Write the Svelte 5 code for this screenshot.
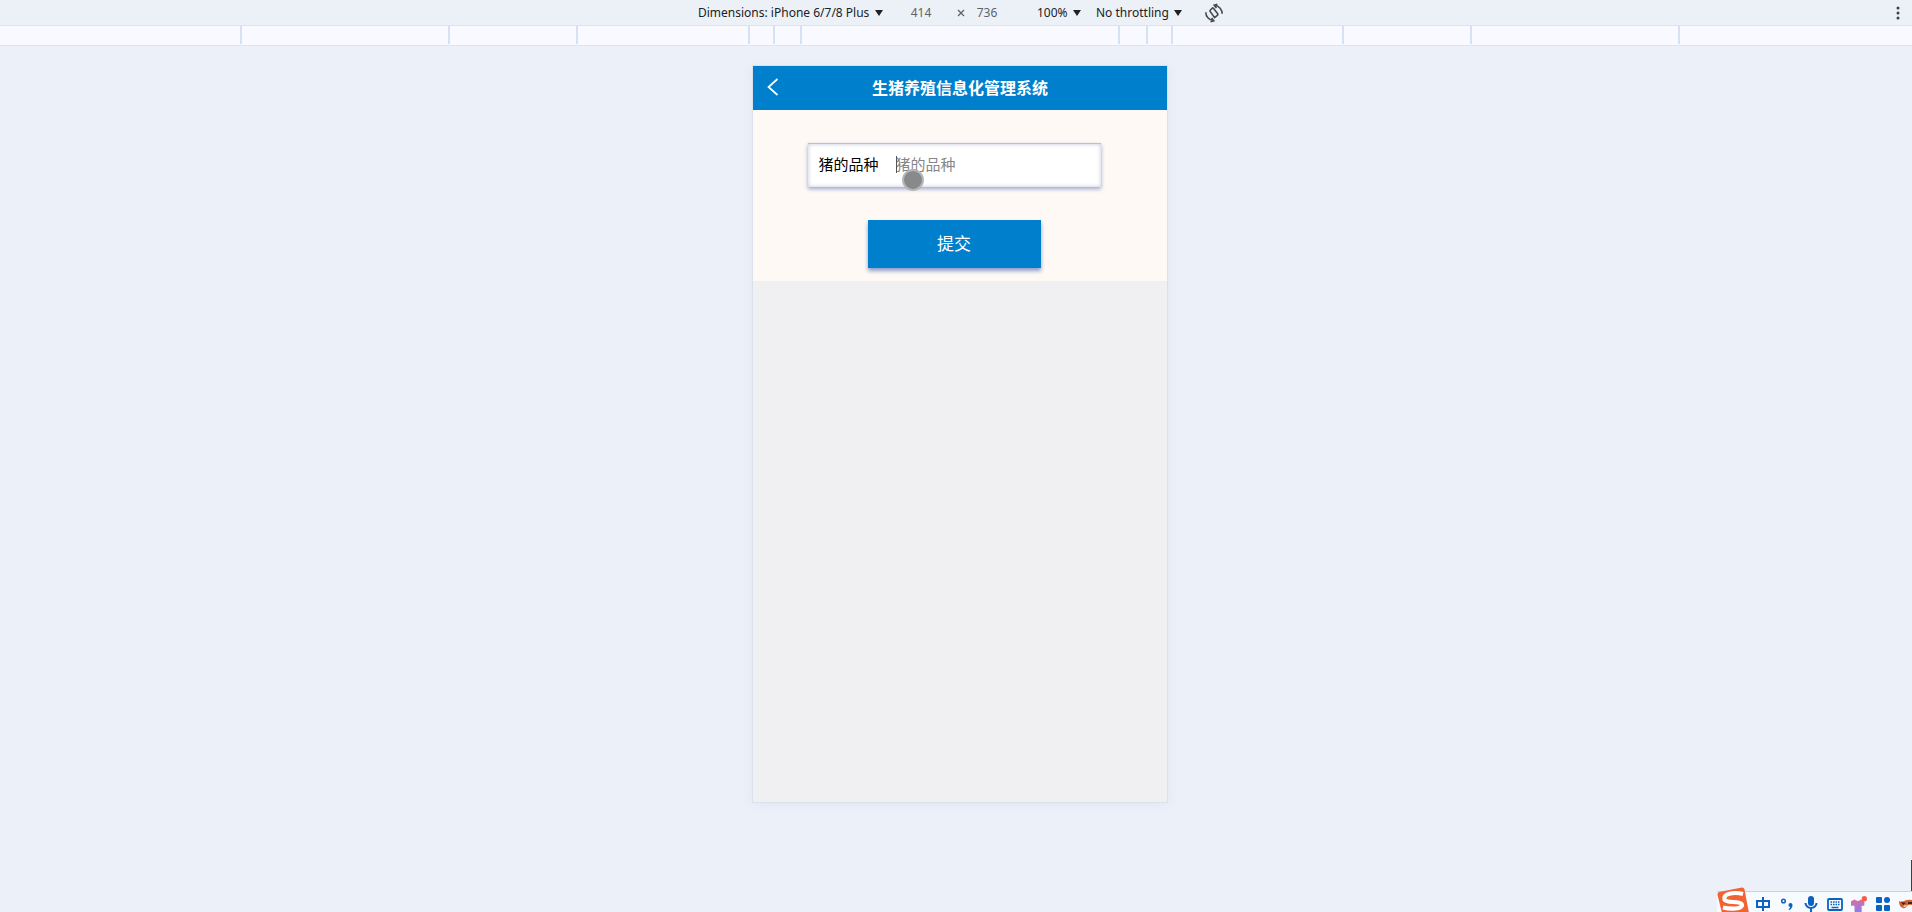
<script>
	const breakpoints = [1440, 1024, 768, 425, 375, 320];

	let device = $state('iPhone 6/7/8 Plus');
	let width = $state('414');
	let height = $state('736');
	let zoom = $state('100%');
	let network = $state('No throttling');
	let breed = $state('');
</script>

<svelte:head>
	<title>生猪养殖信息化管理系统</title>
</svelte:head>

{#snippet arrow()}
	<svg class="arrow" width="8" height="6" viewBox="0 0 8 6" aria-hidden="true">
		<path d="M0 0h8L4 6z" fill="#202124" />
	</svg>
{/snippet}

<div class="devtools">
	<div class="toolbar">
		<div class="controls">
			<label class="picker device">
				<select bind:value={device} aria-label="Device">
					<option value="iPhone 6/7/8 Plus">Dimensions: iPhone 6/7/8 Plus</option>
				</select>
				{@render arrow()}
			</label>
			<div class="size">
				<input bind:value={width} aria-label="Width" />
				<svg width="8" height="8" viewBox="0 0 8 8" stroke="#5f6368" stroke-width="1.3" aria-hidden="true">
					<path d="M1 1l6 6M7 1L1 7" />
				</svg>
				<input bind:value={height} aria-label="Height" />
			</div>
			<label class="picker zoom">
				<select bind:value={zoom} aria-label="Zoom">
					<option>100%</option>
				</select>
				{@render arrow()}
			</label>
			<label class="picker network">
				<select bind:value={network} aria-label="Throttling">
					<option>No throttling</option>
				</select>
				{@render arrow()}
			</label>
			<button class="icon-btn" aria-label="Rotate">
				<svg width="20" height="20" viewBox="0 0 20 20" fill="none" stroke="#474a4f" stroke-width="1.6">
					<path d="M8.2 5.2L6.200 7.200Q5.600 7.900 6.200 8.600L10.600 14.600 13.600 12.200Q14.300 11.500 13.700 10.800L9.400 5.200Q8.800 4.600 8.200 5.200z" />
					<path d="M1.800 9.200c0 4.200 3 8 7.600 8.600M7.600 15l2.200 2.900-3.200.9" />
					<path d="M18.200 10.800c0-4.200-3-8-7.600-8.600M12.400 5l-2.200-2.900 3.200-.9" />
				</svg>
			</button>
		</div>
		<button class="icon-btn more" aria-label="More options">
			<svg width="4" height="14" viewBox="0 0 4 14" fill="#3c4043">
				<circle cx="2" cy="2" r="1.5" />
				<circle cx="2" cy="7" r="1.5" />
				<circle cx="2" cy="12" r="1.5" />
			</svg>
		</button>
	</div>

	<div class="ruler">
		{#each breakpoints as bp}
			<div class="mark" style="width: {bp}px"></div>
		{/each}
	</div>

	<div class="stage">
		<main class="phone">
			<header>
				<button class="back" aria-label="返回">
					<svg width="12" height="18" viewBox="0 0 12 18" fill="none" stroke="#fff" stroke-width="1.7">
						<path d="M10.500 1L1.500 9l9 8" />
					</svg>
				</button>
				<h1>生猪养殖信息化管理系统</h1>
			</header>
			<form onsubmit={(e) => e.preventDefault()}>
				<div class="field">
					<label for="breed">猪的品种</label>
					<div class="entry">
						<input id="breed" placeholder="猪的品种" bind:value={breed} />
						<span class="caret"></span>
						<span class="touch"></span>
					</div>
				</div>
				<button class="submit">提交</button>
			</form>
		</main>
	</div>

	<span class="edge"></span>

	<div class="ime">
		<svg class="logo" width="32" height="26" viewBox="0 0 32 26" aria-hidden="true">
			<path d="M2 5L25 .5q2 0 2.500 2L32 26H5L.5 8q-.5-2 1.500-3z" fill="#f26334" />
			<path d="M26 7C16 4.500 6 7 7.500 12.500c1.500 4 17 1 17.500 5.500 0 4-11 4.500-19 2.500" fill="none" stroke="#fff" stroke-width="4.200" />
		</svg>
		<button aria-label="中文">
			<svg width="16" height="14" viewBox="0 0 16 14" fill="none" stroke="#0c62c0" stroke-width="2">
				<path d="M2 4h12v6H2zM8 0v14" />
			</svg>
		</button>
		<button aria-label="标点">
			<svg width="14" height="14" viewBox="0 0 14 14">
				<circle cx="3.5" cy="4" r="1.800" fill="none" stroke="#0c62c0" stroke-width="1.500" />
				<path d="M8.500 8a2 2 0 1 1 4 0q0 3.500-3.500 5l-.5-1q1.800-.8 1.800-2a2 2 0 0 1-1.800-2z" fill="#0c62c0" />
			</svg>
		</button>
		<button aria-label="语音">
			<svg width="14" height="16" viewBox="0 0 14 16">
				<rect x="4" y="0" width="6" height="10" rx="3" fill="#0c62c0" />
				<path d="M1.500 7a5.500 5 0 0 0 11 0M7 12v4" fill="none" stroke="#0c62c0" stroke-width="2" />
			</svg>
		</button>
		<button aria-label="键盘">
			<svg width="16" height="13" viewBox="0 0 16 13">
				<rect x="1" y="1" width="14" height="11" rx="1" fill="none" stroke="#0c62c0" stroke-width="1.800" />
				<path d="M3.500 4h9M3.500 6.500h9" stroke="#0c62c0" stroke-width="1.600" stroke-dasharray="1.600 .9" />
				<path d="M4.500 9.500h7" stroke="#0c62c0" stroke-width="1.500" />
			</svg>
		</button>
		<button aria-label="皮肤">
			<svg width="18" height="18" viewBox="0 0 18 18">
				<defs>
					<linearGradient id="shirt" x2="0" y2="1">
						<stop offset="0" stop-color="#dc6d9c" />
						<stop offset="1" stop-color="#8d7df0" />
					</linearGradient>
				</defs>
				<path d="M0 6l4-2q4 3 7 0l4 2v5h-3v7H4v-7H0z" fill="url(#shirt)" />
				<circle cx="15" cy="3" r="3" fill="#fb5b4b" />
			</svg>
		</button>
		<button aria-label="工具箱">
			<svg width="14" height="14" viewBox="0 0 14 14" fill="#0c62c0">
				<rect width="6" height="6" rx="1" />
				<circle cx="11" cy="3" r="3" />
				<rect y="8" width="6" height="6" rx="1" />
				<rect x="8" y="8" width="6" height="6" rx="1" />
			</svg>
		</button>
		<svg class="fox" width="13" height="10" viewBox="0 0 13 10" aria-hidden="true">
			<path d="M0 2q2 1 5 0 4-2 8-1v5q-3-1-5 1-2 3-4 2-4-1-4-7z" fill="#d0632f" />
			<path d="M2 3l5 1-3 2zM9 3h4v2H9z" fill="#382824" />
			<path d="M4 7l4-1-2 2z" fill="#fff" />
		</svg>
	</div>
</div>

<style>
	:global(body) {
		margin: 0;
		background: #ebf0f9;
	}

	.devtools {
		min-height: 100vh;
		display: flex;
		flex-direction: column;
		overflow: hidden;
		font-family: 'Noto Sans', 'Open Sans', sans-serif;
	}

	button,
	input,
	select {
		font: inherit;
		color: inherit;
		padding: 0;
		border: 0;
		background: none;
	}

	input,
	select {
		outline: none;
	}

	.toolbar {
		display: flex;
		align-items: center;
		height: 25px;
		padding-left: 10px;
		border-bottom: 1px solid #dce3f3;
		background: #ecf1f8;
		color: #202124;
		font-size: 12px;
		line-height: 16px;
	}

	.controls {
		flex: 1;
		display: flex;
		align-items: center;
		justify-content: center;
		margin-right: -16px;
		height: 20px;
	}

	.picker {
		display: flex;
		align-items: center;
		gap: 5px;
	}

	.picker select {
		appearance: none;
	}

	.size {
		display: flex;
		align-items: center;
		margin: 0 28px 0 16px;
		color: #5f6368;
	}

	.size input {
		width: 44px;
		text-align: center;
	}

	.size svg {
		margin-left: 14px;
	}

	.network {
		margin: 0 22px 0 15px;
	}

	.icon-btn {
		display: flex;
		align-items: center;
	}

	.more {
		margin-right: 12px;
	}

	.ruler {
		display: grid;
		justify-items: center;
		height: 19px;
		padding-left: 8px;
		border-bottom: 1px solid #dde4f1;
		background: #f8faff;
	}

	.mark {
		grid-area: 1 / 1;
		height: 18px;
		box-sizing: border-box;
		border: solid #d7e1f5;
		border-width: 0 2px;
	}

	.stage {
		flex: 1;
		display: flex;
		justify-content: center;
		align-items: flex-start;
		padding: 20px 0 20px 8px;
	}

	.phone {
		width: 414px;
		min-height: 736px;
		background: #f0f0f2;
		box-shadow: 0 0 0 1px #dbe1ea, 0 2px 10px #dfe5ef;
		font-family: 'Noto Sans CJK SC', sans-serif;
	}

	.phone header {
		display: grid;
		grid-template-columns: 40px 1fr 40px;
		align-items: center;
		height: 44px;
		box-sizing: border-box;
		padding-bottom: 2px;
		background: #007fcc;
		color: #fff;
	}

	.back {
		display: flex;
		justify-content: center;
	}

	h1 {
		margin: 0;
		font-size: 16px;
		line-height: 24px;
		text-align: center;
	}

	form {
		display: flex;
		flex-direction: column;
		align-items: center;
		gap: 33px;
		padding: 33px 12px 13px 0;
		background: #fef9f4;
	}

	.field {
		display: flex;
		align-items: center;
		width: 293px;
		height: 44px;
		box-sizing: border-box;
		padding: 0 11px 4px;
		border-top: 1px solid #c0c0c4;
		background: #fff;
		box-shadow: 0 2px 4px #9aa4d0, inset 0 0 4px #c4c8dc;
		font-size: 15px;
		line-height: 22px;
	}

	.field label {
		width: 77px;
		color: #000;
	}

	.entry {
		position: relative;
		flex: 1;
		display: flex;
	}

	.entry input {
		width: 100%;
		height: 22px;
	}

	.entry input::placeholder {
		color: #858585;
		opacity: 1;
	}

	.caret {
		position: absolute;
		left: 0;
		top: 3px;
		width: 1px;
		height: 17px;
		background: #555;
	}

	.touch {
		position: absolute;
		left: 6px;
		top: 16px;
		width: 18px;
		height: 18px;
		border: 2px solid #b5b6b8;
		border-radius: 50%;
		background: #87898b;
	}

	.submit {
		width: 173px;
		height: 48px;
		padding-bottom: 4px;
		background: #007fcc;
		box-shadow: 0 3px 4px #8c9dcb;
		color: #fff;
		font-size: 17px;
	}

	.edge {
		position: fixed;
		right: 0;
		bottom: 20px;
		width: 1px;
		height: 32px;
		background: #3c4043;
	}

	.ime {
		position: fixed;
		right: 0;
		bottom: 0;
		display: flex;
		align-items: center;
		gap: 8px;
		height: 16px;
		padding-top: 4px;
		border-top: 1px solid #c2d1e6;
		background: #f7faff;
	}

	.ime button {
		display: flex;
		justify-content: center;
		width: 16px;
	}

	.ime .logo {
		margin: -8px -2px 0 0;
	}
</style>
